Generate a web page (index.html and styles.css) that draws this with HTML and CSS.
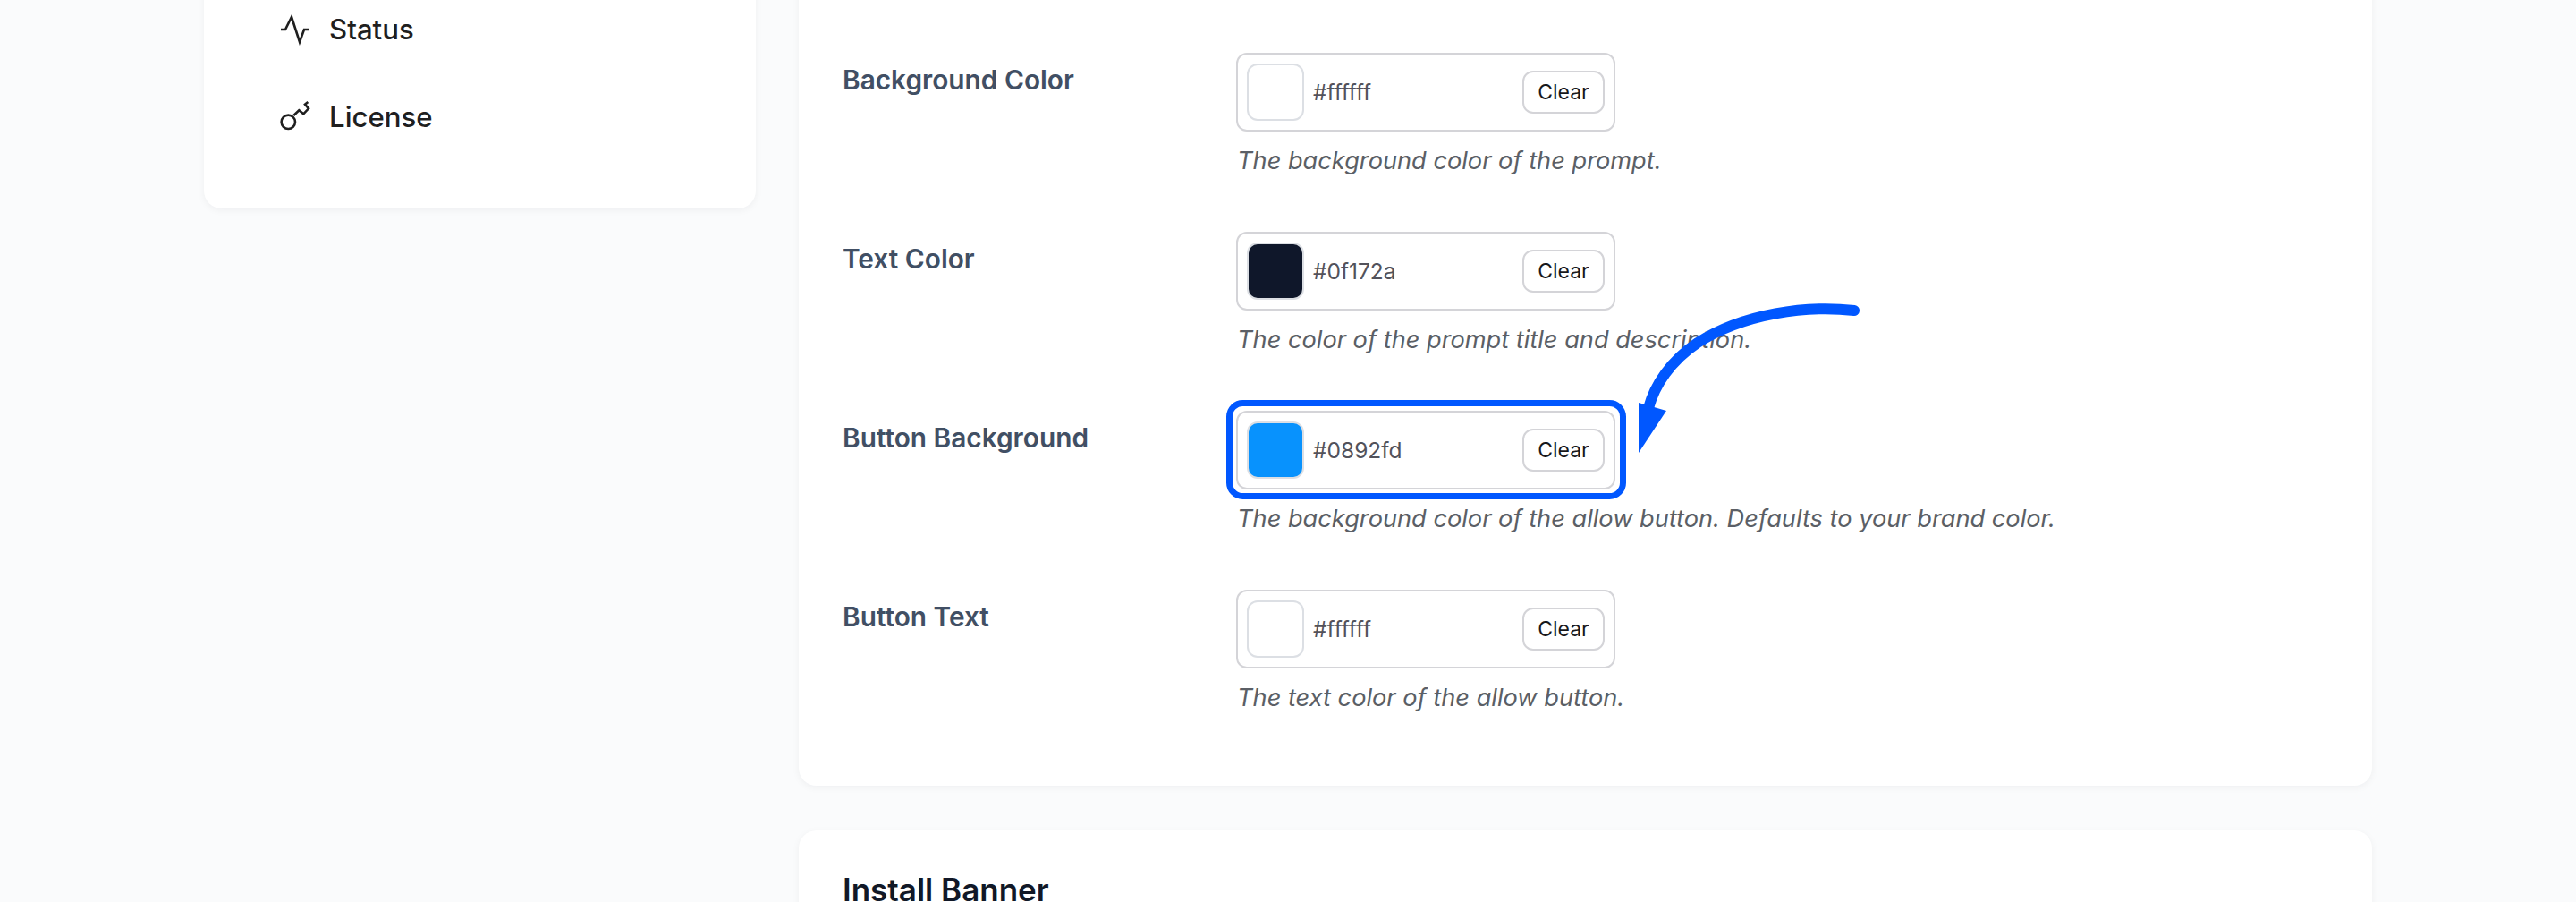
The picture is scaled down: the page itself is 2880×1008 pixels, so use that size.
FILE: index.html
```html
<!DOCTYPE html>
<html lang="en">
<head>
  <meta charset="UTF-8">
  <title>Prompt settings</title>
  <link rel="stylesheet" href="styles.css">
</head>
<body>
  <div class="page">
    <aside class="sidebar">
      <a class="nav-item">
        <svg class="nav-icon" viewBox="0 0 36 36"><path d="M2 18h5l7-14 9 28 5-14h6"/></svg>
        <span>Status</span>
      </a>
      <a class="nav-item">
        <svg class="nav-icon" viewBox="0 0 36 36"><circle cx="10.3" cy="23.3" r="7.7"/><path d="M16.3 16l6-5.7 5 4 5.7-6-4-4.6 3.3-2.7"/></svg>
        <span>License</span>
      </a>
    </aside>

    <main class="content">
      <section class="card card-colors">
        <div class="row">
          <label class="row-label">Background Color</label>
          <div class="row-body">
            <div class="color-field">
              <span class="swatch swatch-white"></span>
              <span class="color-value">#ffffff</span>
              <button class="clear">Clear</button>
            </div>
            <p class="hint">The background color of the prompt.</p>
          </div>
        </div>
        <div class="row">
          <label class="row-label">Text Color</label>
          <div class="row-body">
            <div class="color-field">
              <span class="swatch swatch-dark"></span>
              <span class="color-value">#0f172a</span>
              <button class="clear">Clear</button>
            </div>
            <p class="hint">The color of the prompt title and description.</p>
          </div>
        </div>
        <div class="row">
          <label class="row-label">Button Background</label>
          <div class="row-body">
            <div class="color-field">
              <span class="swatch swatch-blue"></span>
              <span class="color-value">#0892fd</span>
              <button class="clear">Clear</button>
            </div>
            <p class="hint">The background color of the allow button. Defaults to your brand color.</p>
          </div>
        </div>
        <div class="row">
          <label class="row-label">Button Text</label>
          <div class="row-body">
            <div class="color-field">
              <span class="swatch swatch-white"></span>
              <span class="color-value">#ffffff</span>
              <button class="clear">Clear</button>
            </div>
            <p class="hint">The text color of the allow button.</p>
          </div>
        </div>
      </section>

      <section class="card card-banner">
        <h2>Install Banner</h2>
      </section>
    </main>
  </div>

  <svg class="annotation" viewBox="0 0 2880 1008">
    <rect class="mark" x="1374.5" y="450.5" width="440" height="104" rx="15"/>
    <path class="mark mark-round" d="M2073 347C2020 341 1950 350 1898 383C1868 403 1850 430 1843 456"/>
    <path class="mark-head" d="M1832 450L1863 459L1832 506Z"/>
  </svg>
</body>
</html>
```

FILE: styles.css
```css
* {
  box-sizing: border-box;
}

html, body {
  height: 100%;
  margin: 0;
  overflow: hidden;
}

body {
  background-color: #fafbfc;
  color: #1f1f1f;
  font-family: Inter, "Liberation Sans", sans-serif;
}

.page {
  align-items: flex-start;
  display: flex;
  gap: 48px;
  margin-top: -41px;
  padding: 0 228px;
}

.sidebar {
  background-color: #fff;
  border-radius: 20px;
  box-shadow: 0 2px 8px rgba(15, 23, 42, 0.05);
  display: flex;
  flex-direction: column;
  flex: 0 0 617px;
  gap: 50px;
  height: 274px;
  padding: 50px 85px 0;
}

.nav-item {
  align-items: center;
  display: flex;
  font-size: 31.2px;
  font-weight: 500;
  gap: 20px;
  height: 48px;
}

.nav-icon {
  fill: none;
  flex: none;
  height: 36px;
  margin-left: -1px;
  stroke: #1f1f1f;
  stroke-width: 2.6;
  width: 36px;
}

.content {
  display: flex;
  flex-direction: column;
  flex: 1;
  gap: 50px;
}

.card {
  background-color: #fff;
  border-radius: 20px;
  box-shadow: 0 2px 8px rgba(15, 23, 42, 0.05);
  padding: 0 48px 0 49px;
}

.card-colors {
  height: 919px;
  padding-top: 100px;
}

.card-banner {
  height: 200px;
  padding-top: 45px;
}

.card-banner h2 {
  color: #111827;
  font-size: 35px;
  font-weight: 600;
  margin: 0;
}

.row {
  display: flex;
  height: 200px;
}

.row-label {
  color: #414f64;
  flex: 0 0 440px;
  font-size: 29.8px;
  font-weight: 600;
  padding-top: 12px;
}

.color-field {
  align-items: center;
  border: 2px solid #d4d4d8;
  border-radius: 12px;
  display: flex;
  height: 88px;
  padding: 0 10px;
  width: 424px;
}

.swatch {
  border: 2px solid #dcdfe4;
  border-radius: 12px;
  flex: none;
  height: 64px;
  width: 64px;
}

.swatch-white {
  background-color: #fff;
}

.swatch-dark {
  background-color: #0f172a;
}

.swatch-blue {
  background-color: #0892fd;
}

.color-value {
  color: #52525b;
  flex: 1;
  font-size: 24.5px;
  margin-left: 10px;
}

.clear {
  background-color: #fff;
  border: 2px solid #d4d4d8;
  border-radius: 12px;
  color: #18181b;
  font-family: inherit;
  font-size: 23px;
  height: 48px;
  padding: 0;
  width: 92px;
}

.hint {
  color: #5b5f66;
  font-size: 27.2px;
  font-style: italic;
  margin: 16px 0 0 1px;
}

.annotation {
  height: 1008px;
  left: 0;
  position: absolute;
  top: 0;
  width: 2880px;
}

.mark {
  fill: none;
  stroke: #0057ff;
  stroke-width: 7;
}

.mark-round {
  stroke-linecap: round;
  stroke-width: 12;
}

.mark-head {
  fill: #0057ff;
}
```
